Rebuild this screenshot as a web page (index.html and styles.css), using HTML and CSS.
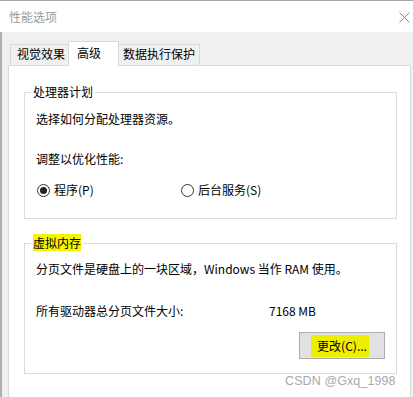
FILE: index.html
```html
<!DOCTYPE html>
<html lang="zh-CN">
<head>
<meta charset="utf-8">
<title>性能选项</title>
<link rel="stylesheet" href="styles.css">
</head>
<body>
<div class="window">
  <div class="titlebar">
    <span class="title">性能选项</span>
    <svg class="close" width="11" height="11" viewBox="0 0 11 11"><path d="M0.5 0.5 L10.5 10.5 M10.5 0.5 L0.5 10.5" stroke="#8a8a8a" stroke-width="1" fill="none"/></svg>
  </div>
  <div class="body">
    <div class="tabs">
      <div class="tab tab1">视觉效果</div>
      <div class="tab tab2 selected">高级</div>
      <div class="tab tab3">数据执行保护</div>
    </div>
    <div class="panel">
      <fieldset class="group g1">
        <legend>处理器计划</legend>
        <p class="line first">选择如何分配处理器资源。</p>
        <p class="line second">调整以优化性能:</p>
        <div class="radios">
          <label class="radio"><span class="circle checked"></span><span>程序(P)</span></label>
          <label class="radio"><span class="circle"></span><span>后台服务(S)</span></label>
        </div>
      </fieldset>
      <fieldset class="group g2">
        <legend><span class="hl">虚拟内存</span></legend>
        <p class="line first2">分页文件是硬盘上的一块区域，Windows 当作 RAM 使用。</p>
        <div class="sizerow"><span class="lbl">所有驱动器总分页文件大小:</span><span>7168 MB</span></div>
        <div class="btnrow"><div class="button"><span class="hl2">更改(C)...</span></div></div>
      </fieldset>
    </div>
  </div>
  <div class="watermark">CSDN @Gxq_1998</div>
</div>
</body>
</html>
```
FILE: styles.css
```css
html, body {
  margin: 0;
  padding: 0;
  background: #ffffff;
}
.window {
  position: relative;
  width: 413px;
  height: 397px;
  overflow: hidden;
  font-family: "Noto Sans CJK SC", "Noto Sans", sans-serif;
  font-size: 12px;
  line-height: 16px;
  color: #000;
}
.titlebar {
  height: 31px;
  border-top: 1px solid #a8a8a8;
  background: #fff;
  display: flex;
  align-items: center;
}
.title {
  margin-left: 9px;
  color: #9a9a9a;
}
.close {
  margin-left: auto;
  margin-right: 3px;
  margin-top: 1px;
}
.body {
  background: #f0f0f0;
  border-left: 2px solid #b0b0b0;
  padding: 9px 0 0 6px;
  height: 400px;
}
.tabs {
  display: flex;
  align-items: flex-end;
  margin-left: 2px;
  height: 24px;
}
.tab {
  box-sizing: border-box;
  background: #f0f0f0;
  border: 1px solid #d9d9d9;
  border-bottom: none;
  padding-top: 1px;
  padding-bottom: 3px;
  white-space: nowrap;
}
.tab1 { width: 58px; padding-left: 6px; }
.tab2 { width: 51px; padding-left: 8px; }
.tab3 { width: 81px; padding-left: 4px; border-left: none; }
.tab.selected {
  position: relative;
  z-index: 1;
  background: #fff;
  padding-top: 3px;
  padding-bottom: 5px;
  margin-bottom: -1px;
  border-left: 1px solid #d9d9d9;
}
.tab1 { border-right: none; }
.panel {
  width: 403px;
  box-sizing: border-box;
  background: #fff;
  border: 1px solid #d9d9d9;
  height: 360px;
  padding-top: 0;
}
.group {
  box-sizing: border-box;
  width: 373px;
  margin: 18px 0 0 15px;
  border: 1px solid #dcdcdc;
  padding: 0 11px 20px 11px;
  min-inline-size: 0;
}
.group legend {
  padding: 0 2px;
  margin-left: -5px;
  line-height: 16px;
}
.g2 {
  margin-top: 16px;
  padding-bottom: 14px;
}
.line {
  margin: 0;
  white-space: nowrap;
}
.first { margin-top: 11px; }
.second { margin-top: 24px; }
.first2 { margin-top: 10px; }
.radios {
  display: grid;
  grid-template-columns: 144px auto;
  margin-top: 15px;
}
.radio {
  display: flex;
  align-items: center;
  gap: 4px;
}
.circle {
  box-sizing: border-box;
  width: 13px;
  height: 13px;
  margin-left: 1px;
  border: 1px solid #333;
  border-radius: 50%;
  display: flex;
  align-items: center;
  justify-content: center;
}
.circle.checked::after {
  content: "";
  width: 7px;
  height: 7px;
  border-radius: 50%;
  background: #222;
}
.sizerow {
  display: grid;
  grid-template-columns: 233px auto;
  margin-top: 26px;
}
.btnrow {
  display: flex;
  justify-content: flex-end;
  margin-top: 13px;
}
.button {
  box-sizing: border-box;
  width: 86px;
  height: 27px;
  background: #e1e1e1;
  border: 1px solid #adadad;
  display: flex;
  align-items: center;
  justify-content: center;
}
.hl {
  background: #f5f500;
}
.hl2 {
  background: #eeee00;
  padding: 3px 2px 3px 6px;
  margin-left: -4px;
  border-radius: 2px;
}
.watermark {
  position: absolute;
  left: 285px;
  top: 373px;
  font-family: "Liberation Sans", Arial, sans-serif;
  font-size: 12.5px;
  line-height: 16px;
  color: #a9a9a9;
  letter-spacing: 0.1px;
}
```
